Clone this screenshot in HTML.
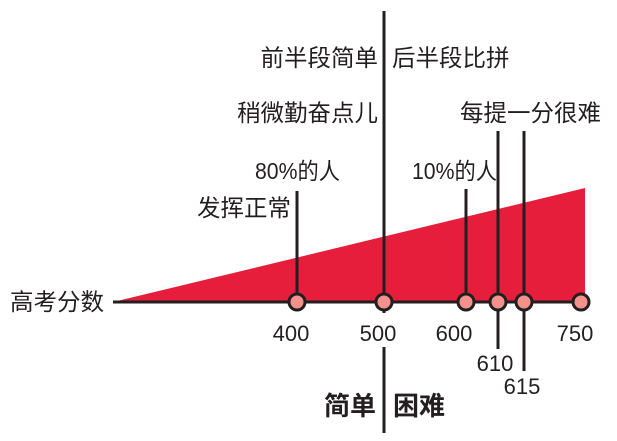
<!DOCTYPE html>
<html><head><meta charset="utf-8"><style>
html,body{margin:0;padding:0;background:#fff;width:617px;height:441px;overflow:hidden}
svg{display:block}
text{font-family:"Liberation Sans","Noto Sans CJK SC",sans-serif;fill:#231f20}
</style></head><body>
<svg width="617" height="441" viewBox="0 0 617 441">
<polygon points="113,302 585,188 585,302" fill="#e61e3c"/>
<g stroke="#231f20" stroke-width="3" fill="none">
<line x1="113" y1="302" x2="582" y2="302"/>
<line x1="384" y1="11" x2="384" y2="313"/>
<line x1="384" y1="347" x2="384" y2="433"/>
<line x1="297" y1="191" x2="297" y2="302"/>
<line x1="466" y1="189" x2="466" y2="302"/>
<line x1="498" y1="131" x2="498" y2="349"/>
<line x1="524" y1="131" x2="524" y2="371"/>
</g>
<g stroke="#231f20" stroke-width="3" fill="#f4918a">
<circle cx="297" cy="302" r="8"/>
<circle cx="384" cy="302" r="8"/>
<circle cx="466" cy="302" r="8"/>
<circle cx="498" cy="302" r="8"/>
<circle cx="524" cy="302" r="8"/>
<circle cx="581" cy="302" r="8"/>
</g>
<g font-size="23.5">
<text x="378" y="66" text-anchor="end">前半段简单</text>
<text x="392" y="66">后半段比拼</text>
<text x="378" y="121" text-anchor="end">稍微勤奋点儿</text>
<text x="460" y="121">每提一分很难</text>
<text x="10" y="310">高考分数</text>
<text x="197" y="216">发挥正常</text>
</g>
<g font-size="23">
<text x="255" y="179" textLength="85" lengthAdjust="spacingAndGlyphs">80%的人</text>
<text x="412" y="179" textLength="85" lengthAdjust="spacingAndGlyphs">10%的人</text>
</g>
<g font-size="22" text-anchor="middle">
<text x="291" y="341">400</text>
<text x="378" y="341">500</text>
<text x="454" y="341">600</text>
<text x="575" y="341">750</text>
<text x="495" y="371">610</text>
<text x="522" y="394">615</text>
</g>
<g font-size="26" font-weight="bold">
<text x="376" y="415" text-anchor="end">简单</text>
<text x="393" y="415">困难</text>
</g>
</svg>
</body></html>
